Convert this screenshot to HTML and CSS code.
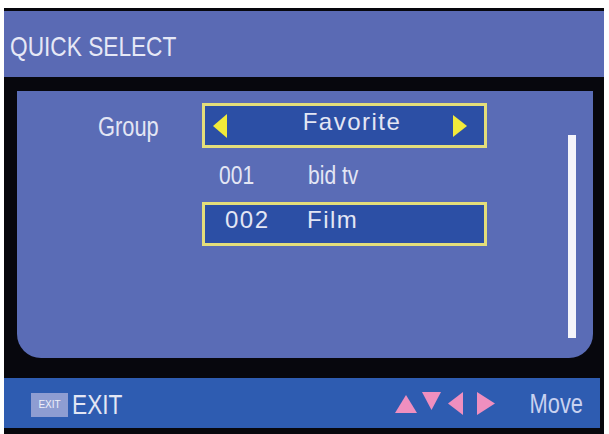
FILE: index.html
```html
<!DOCTYPE html>
<html>
<head>
<meta charset="utf-8">
<link rel="stylesheet" href="styles.css">
</head>
<body>
<div class="screen">
  <div class="header"><span class="title narrow">QUICK SELECT</span></div>
  <div class="body">
    <div class="panel">
      <div class="list">
        <div class="label"><span class="narrow">Group</span></div>
        <div class="box group-box">
          <svg class="arrow" width="14" height="24" viewBox="0 0 14 24"><polygon points="14,0 14,24 0,12" fill="#f2ea3a"/></svg>
          <span class="wide fav">Favorite</span>
          <svg class="arrow" width="14" height="22" viewBox="0 0 14 22"><polygon points="0,0 0,22 14,11" fill="#f2ea3a"/></svg>
        </div>
        <div></div>
        <div class="row">
          <span class="num"><span class="narrow">001</span></span><span class="name narrow">bid tv</span>
        </div>
        <div></div>
        <div class="box sel-box">
          <span class="num2 wide">002</span><span class="name2 wide">Film</span>
        </div>
      </div>
      <div class="scrollbar"></div>
    </div>
  </div>
  <div class="footer">
    <span class="exit-key">EXIT</span>
    <span class="exit-label narrow">EXIT</span>
    <span class="keys">
      <svg width="22" height="18" viewBox="0 0 22 18"><polygon points="11,0 22,18 0,18" fill="#ef8fbf"/></svg>
      <svg class="down" width="19" height="18" viewBox="0 0 19 18"><polygon points="0,0 19,0 9.5,18" fill="#ef8fbf"/></svg>
      <svg class="left" width="15" height="23" viewBox="0 0 15 23"><polygon points="15,0 15,23 0,11.5" fill="#ef8fbf"/></svg>
      <svg class="right" width="18" height="23" viewBox="0 0 18 23"><polygon points="0,0 0,23 18,11.5" fill="#ef8fbf"/></svg>
    </span>
    <span class="move-wrap"><span class="move narrow">Move</span></span>
  </div>
</div>
</body>
</html>
```
FILE: styles.css
```css
html, body {
  margin: 0;
  padding: 0;
  background: #ffffff;
}
.screen {
  margin: 8px 0 0 4px;
  width: 600px;
  height: 426px;
  background: #07070d;
  display: flex;
  flex-direction: column;
  font-family: "Liberation Sans", Arial, sans-serif;
  color: #e3e6f4;
}
.narrow {
  display: inline-block;
  font-family: "Liberation Sans", Arial, sans-serif;
  transform: scaleX(0.81);
  transform-origin: left center;
  white-space: nowrap;
}
.wide {
  font-family: "Liberation Sans", Arial, sans-serif;
  font-size: 24px;
  letter-spacing: 1.5px;
}
.header {
  margin-top: 3px;
  height: 66px;
  background: #5a6ab4;
  display: flex;
  align-items: center;
  padding-left: 6px;
}
.title {
  font-size: 28px;
  padding-top: 5px;
  color: #e6e8f6;
}
.body {
  padding: 14px 11px 20px 13px;
}
.panel {
  height: 267px;
  background: #5a6cb6;
  border-radius: 0 0 24px 24px;
  display: flex;
}
.list {
  display: grid;
  grid-template-columns: 185px 285px;
  grid-template-rows: 45px 54px 44px;
  margin-top: 12px;
}
.label {
  font-size: 27px;
  padding-left: 81px;
  display: flex;
  align-items: center;
  padding-top: 4px;
}
.box {
  box-sizing: border-box;
  border: 3px solid #e4de7a;
  background: #2c4fa5;
  display: flex;
  align-items: center;
}
.group-box {
  padding: 0 17px 0 8px;
}
.fav {
  flex: 1;
  text-align: center;
  padding-left: 24px;
  padding-bottom: 8px;
}
.arrow {
  display: block;
}
.row {
  display: flex;
  align-items: center;
  font-size: 26px;
}
.num {
  padding-left: 17px;
  width: 89px;
}
.sel-box {
  padding-left: 20px;
}
.num2 {
  width: 82px;
  padding-bottom: 8px;
}
.name2 {
  padding-bottom: 8px;
}
.scrollbar {
  margin-left: auto;
  margin-right: 17px;
  margin-top: 44px;
  width: 8px;
  height: 203px;
  background: #f4f4fa;
}
.footer {
  margin-right: 4px;
  height: 50px;
  background: #2e5cb1;
  display: flex;
  align-items: center;
  padding: 0 17px 0 27px;
}
.exit-key {
  width: 37px;
  height: 24px;
  background: #8e9dd2;
  color: #eef0fa;
  font-size: 10px;
  display: flex;
  align-items: center;
  justify-content: center;
  margin-top: 3px;
}
.exit-label {
  font-size: 28px;
  margin-left: 4px;
  margin-top: 3px;
}
.keys {
  margin-left: auto;
  display: flex;
  align-items: flex-start;
  height: 23px;
  margin-top: 6px;
}
.keys svg {
  display: block;
}
.keys .down {
  margin-left: 5px;
  margin-top: -3px;
}
.keys .left {
  margin-left: 7px;
  margin-top: -3px;
}
.keys .right {
  margin-left: 14px;
  margin-top: -3px;
}
.move-wrap {
  margin-left: 33px;
  width: 55px;
  display: flex;
  justify-content: flex-end;
  margin-top: 2px;
}
.move {
  font-size: 27px;
  color: #c9d2f0;
  transform-origin: right center;
}
```
